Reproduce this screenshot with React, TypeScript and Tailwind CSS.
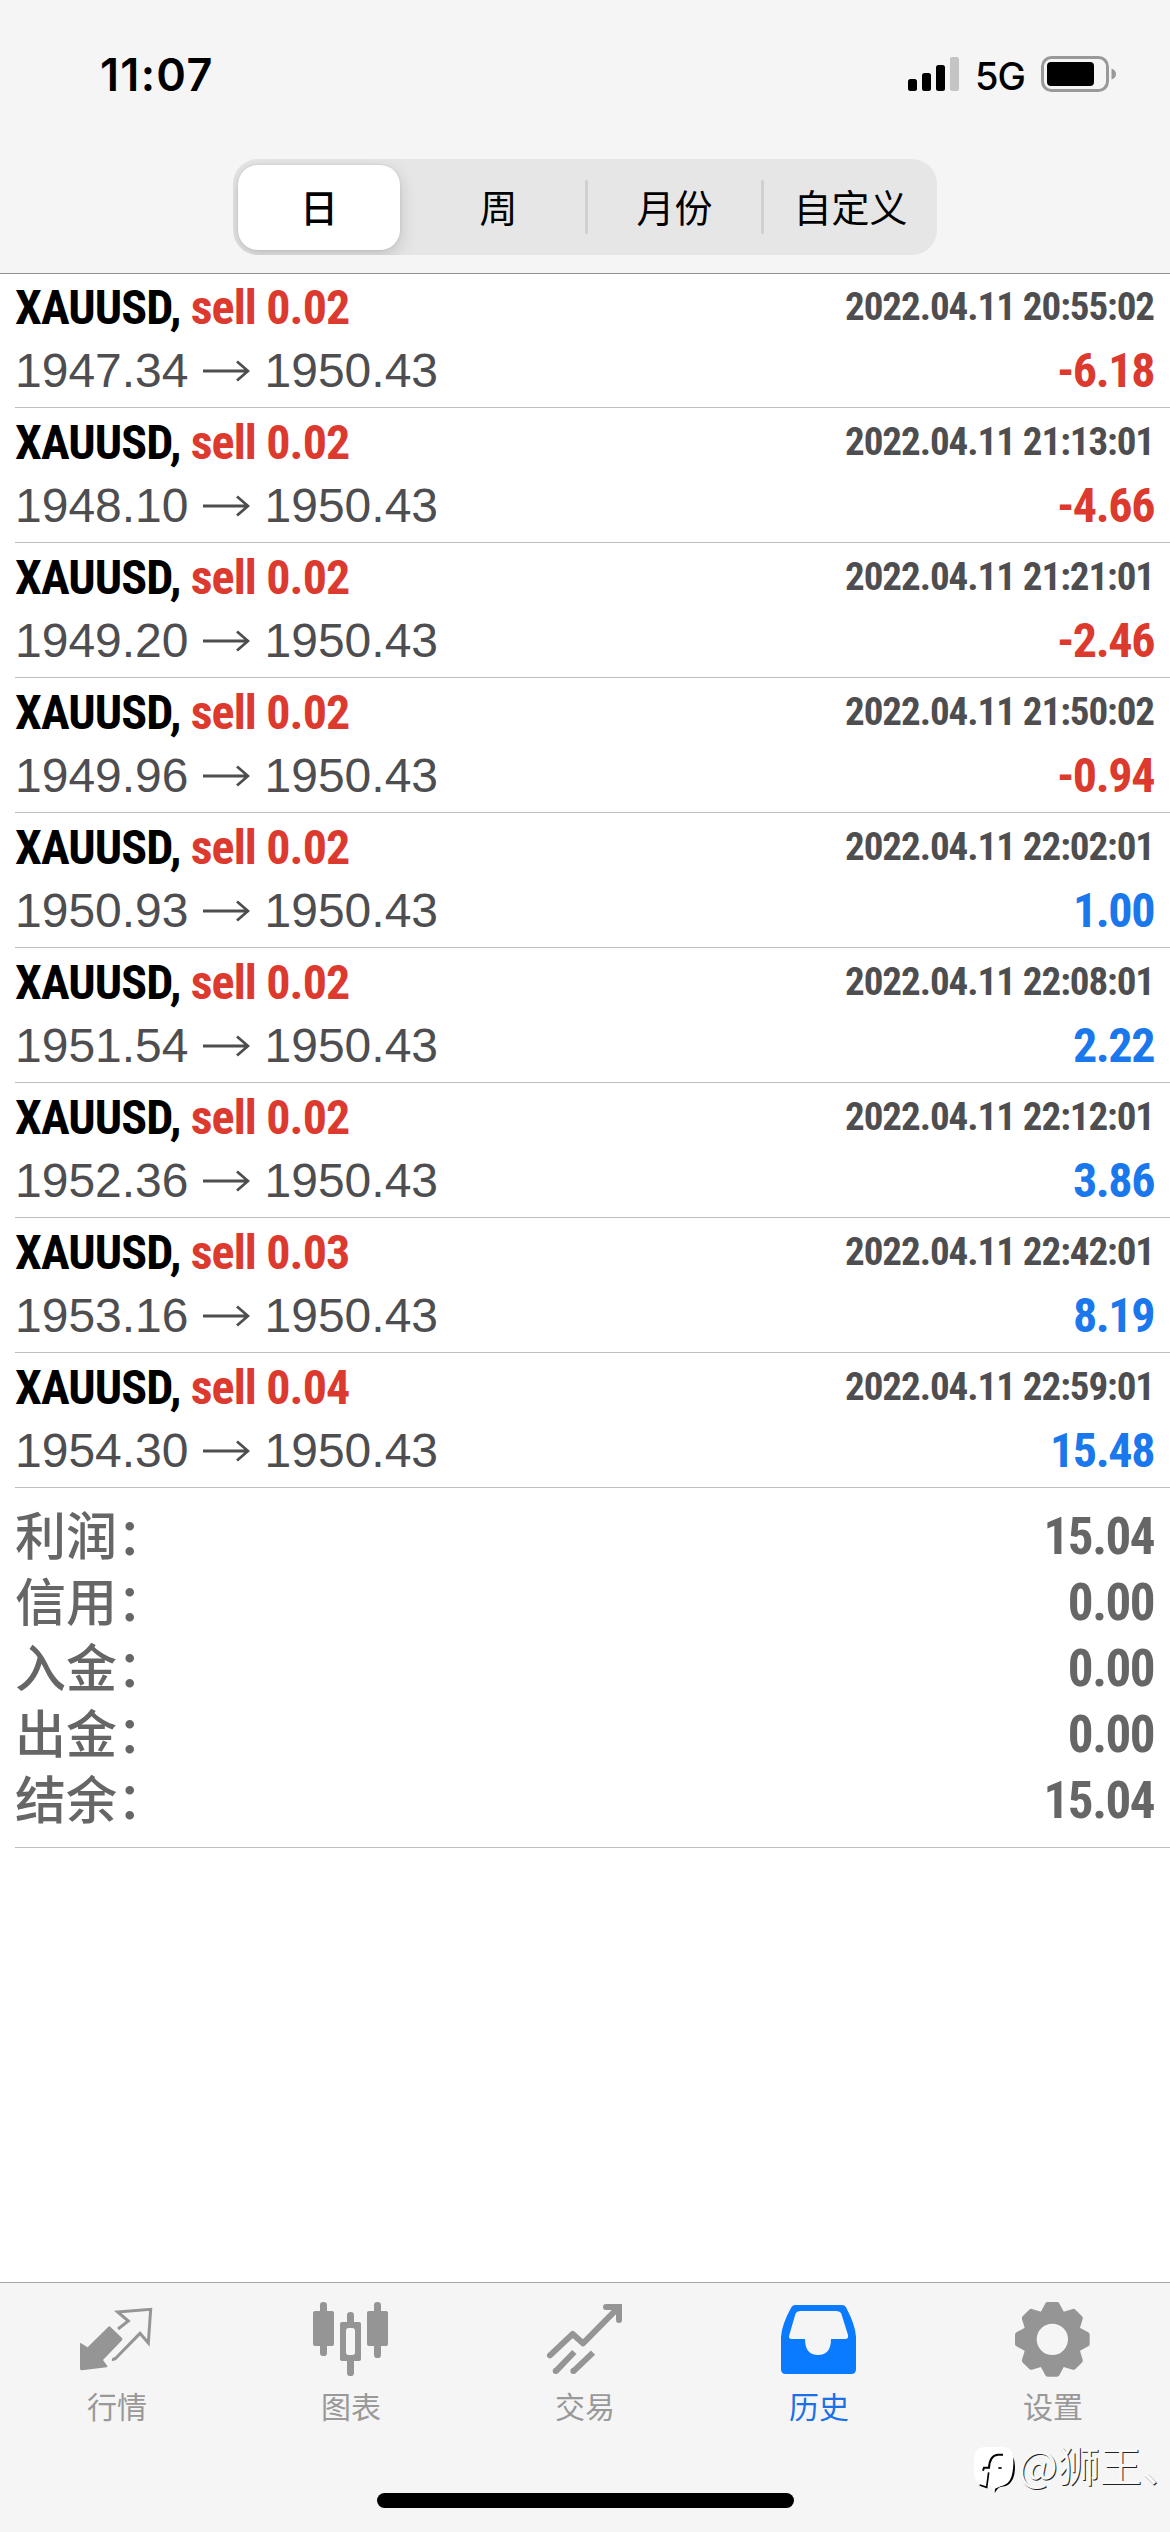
import React from "react";

type Trade = { lot: string; open: string; time: string; profit: string };

const trades: Trade[] = [
  { lot: "0.02", open: "1947.34", time: "20:55:02", profit: "-6.18" },
  { lot: "0.02", open: "1948.10", time: "21:13:01", profit: "-4.66" },
  { lot: "0.02", open: "1949.20", time: "21:21:01", profit: "-2.46" },
  { lot: "0.02", open: "1949.96", time: "21:50:02", profit: "-0.94" },
  { lot: "0.02", open: "1950.93", time: "22:02:01", profit: "1.00" },
  { lot: "0.02", open: "1951.54", time: "22:08:01", profit: "2.22" },
  { lot: "0.02", open: "1952.36", time: "22:12:01", profit: "3.86" },
  { lot: "0.03", open: "1953.16", time: "22:42:01", profit: "8.19" },
  { lot: "0.04", open: "1954.30", time: "22:59:01", profit: "15.48" },
];

const totals = [
  { label: "利润：", value: "15.04" },
  { label: "信用：", value: "0.00" },
  { label: "入金：", value: "0.00" },
  { label: "出金：", value: "0.00" },
  { label: "结余：", value: "15.04" },
];

const periods = ["日", "周", "月份", "自定义"];

const condensed = "font-['Roboto',sans-serif] font-bold [font-stretch:75%] whitespace-nowrap";

function StatusBar() {
  return (
    <div className="flex h-[159px] items-start justify-between pr-[54px] pl-[100px]">
      <div className="mt-[47px] font-['Inter',sans-serif] text-[45px] leading-[56px] font-semibold tracking-[1.3px]">11:07</div>
      <div className="mt-[56px] flex items-start">
        <svg className="mt-px h-[35px] w-[51px]" viewBox="0 0 51 35">
          <rect x="0" y="22" width="9" height="12" rx="2.5" />
          <rect x="14" y="16" width="9" height="18" rx="2.5" />
          <rect x="28" y="8" width="9" height="26" rx="2.5" />
          <rect x="42" y="0" width="9" height="34" rx="2.5" fill="#c4c4c4" />
        </svg>
        <div className="ml-[16px] w-[66px] font-['Inter',sans-serif] text-[38px] leading-[40px] font-medium tracking-[-1px]">5G</div>
        <svg className="h-[36px] w-[75px]" viewBox="0 0 75 36">
          <rect x="1.5" y="1.5" width="65" height="33" rx="9" fill="none" stroke="#999" strokeWidth="3" />
          <rect x="6" y="6" width="47" height="24" rx="4" />
          <path d="M70.5 12.5Q75 14 75 18Q75 22 70.5 23.5Z" fill="#999" />
        </svg>
      </div>
    </div>
  );
}

function PeriodPicker() {
  return (
    <div className="mx-auto grid h-[96px] w-[704px] grid-cols-4 overflow-hidden rounded-[25px] bg-[#e6e6e7] font-['Noto_Sans_CJK_SC',sans-serif] text-[38px] leading-[56px]">
      {periods.map((p, i) => (
        <div key={p} className="flex items-center">
          {i === 0 ? (
            <div className="ml-[5px] flex h-[85px] w-[162px] items-center justify-center rounded-[20px] bg-white pb-[3px] font-medium shadow-[0_6px_18px_rgba(0,0,0,0.16),0_0_3px_rgba(0,0,0,0.1)]">
              {p}
            </div>
          ) : (
            <>
              <div className={i > 1 ? "h-[54px] w-[3px] rounded bg-[#d0d0d2]" : "h-[54px] w-[3px]"} />
              <div className="flex-1 pb-[3px] text-center">{p}</div>
            </>
          )}
        </div>
      ))}
    </div>
  );
}

function TradeRow({ trade }: { trade: Trade }) {
  const loss = trade.profit.startsWith("-");
  return (
    <div className="ml-[15px] flex h-[135px] flex-col justify-end border-b border-[#bdbdbf] pr-[16px] pb-[8px] first:h-[134px]">
      <div className="flex h-[63px] items-start justify-between">
        <div className={`${condensed} text-[48px] leading-[56px] tracking-[-0.9px]`}>
          XAUUSD, <span className="text-[#dc3a2e]">sell {trade.lot}</span>
        </div>
        <div className={`${condensed} mt-[3px] text-[39px] leading-[48px] tracking-[-1.05px] text-[#4e4e50]`}>2022.04.11 {trade.time}</div>
      </div>
      <div className="flex items-start justify-between">
        <div className="flex items-center font-['Liberation_Sans',sans-serif] text-[48px] leading-[56px] text-[#4e4e50]">
          {trade.open}
          <svg className="mr-[15px] ml-[14px] h-[22px] w-[47px]" viewBox="0 0 47 22" fill="none" stroke="#4e4e50" strokeWidth="2.8">
            <path d="M0 11H45M34 1.5L45 11L34 20.5" />
          </svg>
          1950.43
        </div>
        <div className={`${condensed} text-[48px] leading-[56px] tracking-[-1.4px] ${loss ? "text-[#dc3a2e]" : "text-[#1a78ec]"}`}>{trade.profit}</div>
      </div>
    </div>
  );
}

function Totals() {
  return (
    <div className="ml-[15px] border-b border-[#bdbdbf] pt-[16px] pr-[16px] pb-[13px] text-[51px] leading-[66px] text-[#666]">
      {totals.map((t) => (
        <div key={t.label} className="flex h-[66px] justify-between">
          <div className="-mt-[4px] font-['Noto_Sans_CJK_SC',sans-serif] font-medium">{t.label}</div>
          <div className={`${condensed} tracking-[-1.5px]`}>{t.value}</div>
        </div>
      ))}
    </div>
  );
}

function QuotesIcon() {
  return (
    <svg className="size-[80px]" viewBox="111 81 240 240" fill="#959595">
      <path d="M122 219L143 232L205 170Q208 167 211 170L246 204Q249 208 246 211L189 270L202 288Q203 291 200 292L126 301Q120 301 120 296V220Z" />
      <path d="M234 177L265 153L233 126L332 118L325 219L300 190L228 264Q222 269 216 268" fill="none" stroke="#959595" strokeWidth="9" />
    </svg>
  );
}

function ChartIcon() {
  return (
    <svg className="size-[80px]" viewBox="813 81 240 240" fill="#959595">
      <rect x="840" y="96" width="21" height="162" rx="10" />
      <rect x="819" y="123" width="63" height="105" rx="6" />
      <rect x="1002" y="96" width="21" height="168" rx="10" />
      <rect x="981" y="123" width="63" height="105" rx="6" />
      <rect x="921" y="126" width="21" height="192" rx="10" />
      <rect x="900" y="156" width="63" height="117" rx="6" />
      <rect x="918" y="174" width="27" height="81" rx="8" fill="#f5f5f5" />
    </svg>
  );
}

function TradeIcon() {
  return (
    <svg className="size-[80px]" viewBox="135 81 240 240" fill="none" stroke="#959595" strokeWidth="18">
      <path d="M150 256L218 192L249 220L355 113" strokeLinecap="round" strokeLinejoin="round" />
      <path d="M318 111H357V150" strokeLinecap="round" />
      <path d="M167 304L223 246M220 304L279 248" />
      <circle cx="167" cy="303" r="9" fill="#959595" stroke="none" />
      <circle cx="220" cy="303" r="9" fill="#959595" stroke="none" />
    </svg>
  );
}

function HistoryIcon() {
  return (
    <svg className="size-[80px]" viewBox="837 81 240 240" fill="#0a7aff" fillRule="evenodd">
      <path d="M886 105H1026Q1034 105 1038 112Q1066 165 1068 200V298Q1068 312 1054 312H857Q843 312 843 298V200Q845 165 874 112Q878 105 886 105ZM902 123Q890 123 886 133L868 195Q864 207 875 207H915Q915 255 954 255Q993 255 993 207H1036Q1046 207 1044 195L1024 131Q1020 123 1008 123Z" />
    </svg>
  );
}

function SettingsIcon() {
  return (
    <svg className="size-[80px]" viewBox="339 81 240 240">
      <circle cx="457" cy="208" r="67" fill="none" stroke="#959595" strokeWidth="40" />
      {[0, 45, 90, 135, 180, 225, 270, 315].map((a) => (
        <path key={a} d="M427 134L443 104H471L487 134Z" fill="#959595" stroke="#959595" strokeWidth="16" strokeLinejoin="round" transform={`rotate(${a} 457 208)`} />
      ))}
    </svg>
  );
}

const tabs = [
  { label: "行情", Icon: QuotesIcon },
  { label: "图表", Icon: ChartIcon },
  { label: "交易", Icon: TradeIcon },
  { label: "历史", Icon: HistoryIcon, active: true },
  { label: "设置", Icon: SettingsIcon },
];

function TabBar() {
  return (
    <nav className="relative mt-auto flex h-[250px] flex-col border-t border-[#a6a6a8] bg-[#f5f5f5]">
      <div className="grid grid-cols-5 pt-[14px]">
        {tabs.map(({ label, Icon, active }) => (
          <div key={label} className="flex flex-col items-center">
            <Icon />
            <div className={`mt-[8px] font-['Noto_Sans_CJK_SC',sans-serif] text-[30px] leading-[40px] ${active ? "text-[#1a70e6]" : "text-[#999]"}`}>{label}</div>
          </div>
        ))}
      </div>
      <div className="mx-auto mt-auto mb-[24px] h-[15px] w-[417px] rounded-full bg-black" />
      <div className="absolute top-[156px] left-[974px] flex items-start">
        <svg className="mt-[8px] h-[50px] w-[44px] overflow-visible" viewBox="27 51 132 150">
          <path d="M124 56Q150 74 150 110Q150 156 122 168L104 172Q96 176 89 189L90 176Q104 170 118 164Q140 154 142 110Z" fill="#000" />
          <path d="M60 51H112Q144 52 145 84Q147 150 122 163Q112 169 100 169Q90 173 86 182L76 166L67 171L44 164Q27 150 27 130V84Q28 52 60 51Z" fill="#fff" />
          <path d="M54 122L57 113H72Q74 77 98 74H114" fill="none" stroke="#000" strokeWidth="6" />
          <path d="M100 114H110" stroke="#000" strokeWidth="5" />
          <path d="M71 127L65 172L44 165" fill="none" stroke="#000" strokeWidth="5" />
        </svg>
        <div className="font-['Noto_Sans_CJK_SC',sans-serif] text-[42px] leading-[50px] whitespace-nowrap text-[#f8f8f8] [font-feature-settings:'halt'] [text-shadow:1px_1px_0_#222]">@狮王、</div>
      </div>
    </nav>
  );
}

export default function App() {
  return (
    <div className="flex h-[2532px] w-[1170px] flex-col overflow-hidden bg-white text-black">
      <header className="h-[274px] shrink-0 border-b border-[#8e8e90] bg-[#f5f5f5]">
        <StatusBar />
        <PeriodPicker />
      </header>
      <section>
        {trades.map((trade) => (
          <TradeRow key={trade.open} trade={trade} />
        ))}
      </section>
      <Totals />
      <TabBar />
    </div>
  );
}
